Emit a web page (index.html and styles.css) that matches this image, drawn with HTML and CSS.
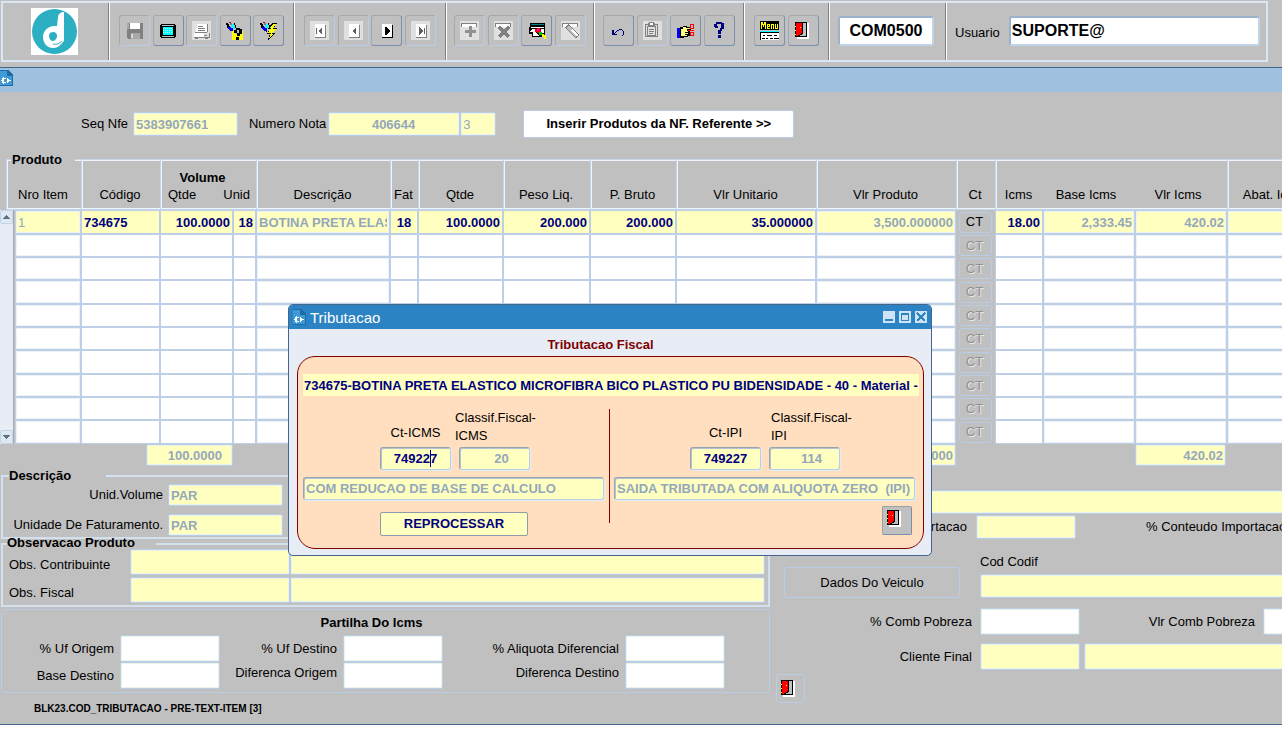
FILE: index.html
```html
<!DOCTYPE html>
<html lang="pt-BR">
<head>
<meta charset="utf-8">
<title>COM0500</title>
<link rel="stylesheet" href="styles.css">
</head>
<body>
<svg class="sprite" aria-hidden="true">
  <symbol id="door" viewBox="0 0 14 17">
    <path fill="#fff" d="M2 1h12v16H2z"/><path fill="#000" d="M0 0h12v15H0z"/><path fill="#c0c0c0" d="M8 1h3v13H5v-1h2v-1h1z"/>
    <path fill="#f00" d="M1 1h6v10H6v1H5v1H3v1H1z"/><path fill="#ff0" d="M5 5h1v1H5zM0 4h1v1H0zM0 8h1v1H0zM0 12h1v1H0z"/>
  </symbol>
  <symbol id="torch" viewBox="0 0 20 20">
    <path fill="#000" d="M1 2h2v1h1v2h1v2h2v3H5V9H4V7H2V4H1z"/><path fill="#d00" d="M4 1h2v1H4z"/><path fill="#00f" d="M3 6h3v1h2v3H6V9H4V8H3z"/>
    <path fill="#0ff" d="M6 3h3v2h1v3H8V6H6z"/><path fill="#808080" d="M5 2h2v2H5z"/><path fill="#000" d="M9 2h1v2h1v3h-1V4H9zM7 10h1v1H7z"/>
  </symbol>
  <symbol id="page" viewBox="0 0 19 19">
    <path fill="#e0e0e0" d="M0 0h19v19H0z"/><path fill="#808080" d="M15 4h1v13H5v-1h10z"/><path fill="#fff" d="M5 3h10v13H5z"/>
  </symbol>
  <symbol id="doc" viewBox="0 0 13 16">
    <path fill="#1d6ca6" d="M0 0h8v5h5v11H0z"/><path fill="#3f9ad8" d="M0 1h7v5h5v9H0z"/><path fill="#1d6ca6" d="M8 0l5 5H8z"/>
    <path fill="#fff" d="M2 8h1V7h1v1h2v1H4v3h2v1H4v1H3v-1H2v-2H1V10h1zM7 8h1v1h1v1h2v1H9v1H8v1H7z"/>
  </symbol>
</svg>

<div class="app">
  <header class="topbar">
    <div class="toolbar">
      <div class="group logo">
        <svg width="47" height="47" viewBox="0 0 47 47" role="img" aria-label="Logo">
          <path fill="#fff" d="M0 0h47v47H0z"/><circle cx="23.500" cy="23.500" r="22.500" fill="#2cafc3"/>
          <path fill="#fff" d="M33 4v26c0 2 0 3-1 4l-1 1c-2 3-5 5-9 5-6 0-10-5-10-11s5-11 11-11h3l1-9c0-3 3-5 6-5z"/>
          <path fill="#2cafc3" d="M22 24c3 0 4 2 4 4s-2 5-4 5-4-2-4-5 2-4 4-4z"/>
          <path fill="none" stroke="#2cafc3" stroke-width="1" d="M22 36c4 1 7-1 9-3"/>
        </svg>
      </div>
      <div class="group">
        <button class="tool off" aria-label="Salvar"><svg width="20" height="20" viewBox="0 0 20 20"><path fill="#808080" d="M2 2h16v16H3v-1H2z"/><path fill="#fff" d="M5 2h10v6H5z"/><path fill="#a8a8a8" d="M2 2h2v6H2zM6 12h9v6H6z"/><path fill="#d8d8d8" d="M6 13h2v4H6z"/></svg></button>
        <button class="tool" aria-label="Tela"><svg width="20" height="20" viewBox="0 0 20 20"><path d="M3 3h14v1h1v12h-1v1H3v-1H2V4h1z"/><path fill="#c0c0c0" d="M4 4h12v12H4z"/><path d="M4 5h12v10H4z"/><path fill="#0ff" d="M5 6h10v8H5z"/><path stroke="#b8ffff" stroke-dasharray="1 1" d="M5 7.500h10M5 9.500h10M5 11.500h10"/></svg></button>
        <button class="tool off" aria-label="Imprimir"><svg width="19" height="19" viewBox="0 0 19 19"><path fill="#e0e0e0" d="M0 0h19v19H0z"/><path fill="#fff" d="M5 3h10v9H4z"/><path fill="#808080" d="M6 5h5v1H6zM6 7h7v1H6zM6 9h7v1H6zM15 3h1v8h-1zM2 16h15v1H2zM12 14h3v1h-3zM17 12h1v5h-1zM3 11h12v1H3zM3 18h3v-1H3zM13 18h3v-1h-3z"/><path fill="#fff" d="M2 12h10v4H2z"/></svg></button>
        <button class="tool" aria-label="Consultar"><svg width="20" height="20" viewBox="0 0 20 20"><use href="#torch"/><path fill="#ff0" d="M7 10h3v9H7zM10 13h3v6h-3zM15 10h3v9h-6v-4h3z"/><path d="M11 7h4v1h2v5h-2v2h-3v-3h2V9h-2v3H9V9h2zM11 16h3v3h-3z"/></svg></button>
        <button class="tool" aria-label="Executar consulta"><svg width="20" height="20" viewBox="0 0 20 20"><use href="#torch"/><path d="M13 2h5l-3 5h3l-4 5h2l-7 7 2-6H8l3-5H9z"/><path fill="#ff0" d="M14 3h3l-3 5h3l-4 5h1l-4 5 2-6H9l3-5h-1z"/></svg></button>
      </div>
      <div class="group">
        <button class="tool off" aria-label="Primeiro"><svg width="19" height="19" viewBox="0 0 19 19"><use href="#page"/><path fill="#606060" d="M6 7h1v6H6zM12 6v8l-4-4z"/></svg></button>
        <button class="tool off" aria-label="Anterior"><svg width="19" height="19" viewBox="0 0 19 19"><use href="#page"/><path fill="#606060" d="M12 6v8l-4-4z"/></svg></button>
        <button class="tool" aria-label="Proximo"><svg width="19" height="19" viewBox="0 0 19 19"><path d="M15 4h1v13H5v-1h10z"/><path fill="#fff" d="M5 3h10v13H5z"/><path d="M8 6h1l4 4-4 4H8z"/></svg></button>
        <button class="tool off" aria-label="Ultimo"><svg width="19" height="19" viewBox="0 0 19 19"><use href="#page"/><path fill="#606060" d="M8 6v8l4-4zM13 7h1v6h-1z"/></svg></button>
      </div>
      <div class="group tight">
        <button class="tool off" aria-label="Inserir"><svg width="19" height="19" viewBox="0 0 19 19"><path fill="#e0e0e0" d="M0 0h19v19H0z"/><path fill="#808080" d="M1 2h16v4H1z"/><path fill="#fff" d="M2 3h14v3H2z"/><path fill="#909090" d="M9 5h3v4h4v3h-4v4H9v-4H5V9h4z"/></svg></button>
        <button class="tool off" aria-label="Remover"><svg width="19" height="19" viewBox="0 0 19 19"><path fill="#e0e0e0" d="M0 0h19v19H0z"/><path fill="#808080" d="M1 2h16v4H1z"/><path fill="#fff" d="M2 3h14v3H2z"/><path stroke="#808080" stroke-width="3" d="M5 6l10 10M15 6L5 16"/></svg></button>
        <button class="tool" aria-label="Pesquisar"><svg width="20" height="20" viewBox="0 0 20 20"><path d="M3 2h15v14H5v-3H2V6h1z"/><path fill="#008080" d="M4 3h13v1H4z"/><path fill="#fff" d="M4 6h13v1H4zM3 10l2-2h3v3l4 4H8v-2H6v-2H3z"/><path fill="#fff" d="M6 13h3v2H6zM14 8h3v4h-3z"/><path fill="#f00" d="M8 8h2V7h3v2h1v3h-4v-1H8z"/><path fill="#f0f" d="M10 8h2v2h-2z"/><path fill="#0c0" d="M12 11h3v3h-3z"/><path fill="#ff0" d="M15 13h2v1h2v4h-2v-2h-2z"/></svg></button>
        <button class="tool off" aria-label="Limpar"><svg width="19" height="19" viewBox="0 0 19 19"><path fill="#e0e0e0" d="M0 0h19v19H0z"/><path fill="#808080" d="M1 2h16v4H1z"/><path fill="#fff" d="M2 3h14v3H2z"/><path stroke="#808080" stroke-width="5" d="M6 5l11 11"/><path stroke="#c0c0c0" stroke-width="3" d="M7 6l9 9"/><path stroke="#fff" stroke-width="2" d="M11 9l6 6"/></svg></button>
      </div>
      <div class="group mid">
        <button class="tool" aria-label="Desfazer"><svg width="20" height="20" viewBox="0 0 20 20"><path fill="#000080" d="M4 9h1v3h1v1h2v1H3V9zM6 11h1v-1h1V9h2V8h3v1h1v1h1v4h-1v1h-1v-1h1v-4h-1V9h-3v1H8v1H7v1H6z"/></svg></button>
        <button class="tool off" aria-label="Colar"><svg width="19" height="19" viewBox="0 0 19 19"><path fill="#e0e0e0" d="M0 0h19v19H0z"/><path fill="none" stroke="#808080" d="M2.500 3.500h12v12h-12zM4.500 5.500h8v9h-8z"/><path fill="#808080" d="M6 1h5v1h1v3H5V2h1zM6 8h5v1H6zM6 10h5v1H6zM6 12h4v1H6z"/><path fill="#fff" d="M7 2h3v2H7z"/></svg></button>
        <button class="tool" aria-label="Recortar"><svg width="20" height="20" viewBox="0 0 20 20"><path fill="#00f" d="M1 7h3v10H1z"/><path d="M4 6h3V5h4v1h4v3h-3v1h2v5h-2v1H8v1H4z"/><path fill="#ff8" d="M5 8h2V6h3v1h4v1h-3v2H9v5H5z"/><path fill="#ff8" d="M9 10h3v1H9zM9 12h3v1H9zM9 14h2v1H9z"/><path fill="none" stroke="#f00" d="M14.500 3.500h3v4h-3zM14.500 11.500h3v3h-3zM12 9.500h6"/></svg></button>
        <button class="tool" aria-label="Ajuda"><svg width="20" height="20" viewBox="0 0 20 20"><path fill="#000080" d="M7 1h6v1h2v6h-2v2h-1v3H9V9h2V7h1V3H8v2h1v2H6V6H5V3h2zM9 14h3v3H9z"/></svg></button>
      </div>
      <div class="group">
        <button class="tool" aria-label="Menu"><svg width="20" height="20" viewBox="0 0 20 20"><path d="M0 0h19v9H0z"/><g fill="none" stroke="#ff0"><path d="M1.500 8V1M2.500 1v3M3.500 3v3M4.500 1v3M5.500 8V1M10 7.500H7.500v-4h2v2h-2M11.500 8V3M11.500 3.500h2V8M15.500 3v4.500h2V3"/></g><path fill="#fff" d="M0 11h19v8H0z"/><path fill="#0ff" d="M0 10h19v1H0z"/><path d="M0 11h19v1H0zM0 11h1v8H0zM3 14h2v1H3zM7 14h5v1H7zM14 14h3v1h-3zM2 17h3v1H2zM6 17h2v1H6zM10 17h3v1h-3zM14 17h5v1h-5z"/></svg></button>
        <button class="tool" aria-label="Sair"><svg width="20" height="20" viewBox="0 0 20 20"><use href="#door" x="1" y="1" width="14" height="17"/></svg></button>
      </div>
      <div class="group screen"><input class="big" aria-label="Tela atual" value="COM0500"></div>
      <div class="group user"><label for="usuario">Usuario</label><input class="big" id="usuario" value="SUPORTE@"></div>
    </div>
  </header>
  <div class="window-bar"><svg width="13" height="16"><use href="#doc"/></svg></div>

  <main>
    <div class="note-row">
      <label for="seq">Seq Nfe</label><input id="seq" class="field dim" value="5383907661" readonly>
      <label for="nota">Numero Nota</label><input id="nota" class="field dim num" value="406644" readonly><input class="field dim serie" aria-label="Serie" value="3" readonly>
      <button class="insert">Inserir Produtos da NF. Referente &gt;&gt;</button>
    </div>

    <section class="products">
      <h2>Produto</h2>
      <div class="scroller"><button aria-label="Subir"><svg width="7" height="4"><path fill="#5f6f85" d="M3 0h1l3 4H0z"/></svg></button><button aria-label="Descer"><svg width="7" height="4"><path fill="#5f6f85" d="M0 0h7L4 4H3z"/></svg></button></div>
      <table>
        <colgroup><col class="c9"><col class="c66"><col class="c79"><col class="c73"><col class="c23"><col class="c134"><col class="c28"><col class="c85"><col class="c87"><col class="c86"><col class="c140"><col class="c140"><col class="c39"><col class="c48"><col class="c92"><col class="c92"><col class="c94"></colgroup>
        <thead><tr>
          <th colspan="2">Nro Item</th><th>Código</th>
          <th colspan="2"><strong>Volume</strong><span class="pair"><span>Qtde</span><span>Unid</span></span></th>
          <th>Descrição</th><th>Fat</th><th>Qtde</th><th>Peso Liq.</th><th>P. Bruto</th><th>Vlr Unitario</th><th>Vlr Produto</th><th>Ct</th><th>Icms</th><th class="open">Base Icms</th><th class="open">Vlr Icms</th><th>Abat. Icms</th>
        </tr></thead>
        <tbody id="items"></tbody>
      </table>
    </section>

    <div class="totals">
      <input class="field dim sum-volume" aria-label="Total volume" value="100.0000" readonly>
      <input class="field dim sum-product" aria-label="Total produto" value="3,500.000000" readonly>
      <input class="field dim sum-icms" aria-label="Total icms" value="420.02" readonly>
    </div>

    <div class="lower">
      <div class="left">
        <fieldset class="desc">
          <legend>Descrição</legend>
          <label for="uv">Unid.Volume</label><input id="uv" class="field dim" value="PAR" readonly>
          <label for="uf">Unidade De Faturamento.</label><input id="uf" class="field dim" value="PAR" readonly>
        </fieldset>
        <fieldset class="obs">
          <legend>Observacao Produto</legend>
          <label for="oc">Obs. Contribuinte</label><input id="oc" class="field"><input class="field" aria-label="Texto contribuinte">
          <label for="of">Obs. Fiscal</label><input id="of" class="field"><input class="field" aria-label="Texto fiscal">
        </fieldset>
        <section class="share">
          <h3>Partilha Do Icms</h3>
          <div class="share-grid">
            <label for="p1">% Uf Origem</label><input id="p1" class="field white">
            <label for="p2">% Uf Destino</label><input id="p2" class="field white">
            <label for="p3">% Aliquota Diferencial</label><input id="p3" class="field white">
            <label for="p4">Base Destino</label><input id="p4" class="field white">
            <label for="p5" class="high">Diferenca Origem</label><input id="p5" class="field white">
            <label for="p6" class="high">Diferenca Destino</label><input id="p6" class="field white">
          </div>
        </section>
      </div>
      <div class="right">
        <input class="field wide" aria-label="Detalhe">
        <div class="import"><label for="imp">Importacao</label><input id="imp" class="field"><span>% Conteudo Importacao</span></div>
        <div class="vehicle"><button class="plain">Dados Do Veiculo</button><div class="codif"><label for="cod">Cod Codif</label><input id="cod" class="field"></div></div>
        <div class="comb"><label for="cp">% Comb Pobreza</label><input id="cp" class="field white"><label for="vp">Vlr Comb Pobreza</label><input id="vp" class="field white"></div>
        <div class="client"><label for="cf">Cliente Final</label><input id="cf" class="field"><input class="field" aria-label="Nome do cliente"></div>
        <button class="plain exit" aria-label="Sair"><svg width="14" height="17"><use href="#door"/></svg></button>
      </div>
    </div>
    <footer>BLK23.COD_TRIBUTACAO - PRE-TEXT-ITEM [3]</footer>
  </main>

  <div class="dialog" role="dialog" aria-label="Tributacao">
    <div class="dialog-bar">
      <svg width="13" height="16"><use href="#doc"/></svg><span>Tributacao</span>
      <button aria-label="Minimizar"><svg width="12" height="12"><path fill="#2c83c4" d="M2 8h8v2H2z"/></svg></button>
      <button aria-label="Maximizar"><svg width="12" height="12"><path fill="#2c83c4" fill-rule="evenodd" d="M2 2h8v8H2zM3 4v5h6V4z"/></svg></button>
      <button aria-label="Fechar"><svg width="12" height="12"><path stroke="#2c83c4" stroke-width="2" d="M2 2l8 8M10 2l-8 8"/></svg></button>
    </div>
    <h3>Tributacao Fiscal</h3>
    <div class="panel">
      <input class="item-name" aria-label="Item" value="734675-BOTINA PRETA ELASTICO MICROFIBRA BICO PLASTICO PU BIDENSIDADE - 40 - Material -">
      <div class="halves">
        <div class="half">
          <div class="codes">
            <label for="ci">Ct-ICMS</label><label for="ki" class="two">Classif.Fiscal-<br>ICMS</label>
            <span class="with-caret"><input id="ci" class="sunk" value="749227"><i class="caret"></i></span><input id="ki" class="sunk dim" value="20" readonly>
          </div>
          <input class="sunk dim text" aria-label="Descricao ICMS" value="COM REDUCAO DE BASE DE CALCULO" readonly>
          <button class="redo">REPROCESSAR</button>
        </div>
        <div class="half ipi">
          <div class="codes">
            <label for="cj">Ct-IPI</label><label for="kj" class="two">Classif.Fiscal-<br>IPI</label>
            <input id="cj" class="sunk" value="749227"><input id="kj" class="sunk dim" value="114" readonly>
          </div>
          <input class="sunk dim text" aria-label="Descricao IPI" value="SAIDA TRIBUTADA COM ALIQUOTA ZERO  (IPI)" readonly>
          <button class="leave" aria-label="Sair"><svg width="14" height="17"><use href="#door"/></svg></button>
        </div>
      </div>
    </div>
  </div>
</div>
<script src="grid.js"></script>
</body>
</html>
```
FILE: styles.css
```css
* { box-sizing: border-box; }
body { margin: 0; background: #fff; color: #000; font: 13px/16px "Liberation Sans", Arial, sans-serif; overflow-x: hidden; }
input, button { font: inherit; color: inherit; margin: 0; padding: 0; min-width: 0; border-radius: 2px; outline: 0; }
button { display: flex; align-items: center; justify-content: center; background: #c0c0c0; }
h2, h3 { margin: 0; font-size: 13px; }
svg { display: block; flex: none; shape-rendering: crispEdges; }
.sprite { position: absolute; width: 0; height: 0; }
.app { position: relative; overflow: hidden; background: #c0c0c0; border-bottom: 1px solid #44648c; }

/* toolbar */
.topbar { padding: 1px 14px 5px 1px; border-bottom: 1px solid #44648c; }
.toolbar { display: grid; grid-template-columns: 107px 185px 152px 148px 150px 85px 117px 1fr; height: 61px; border: 2px solid #d9e6f3; }
.group { display: flex; align-items: center; justify-content: space-between; padding: 0 10px 2px 9px; border-right: 1px solid #fff; box-shadow: inset -1px 0 #808080; }
.group.logo { justify-content: flex-start; padding: 0 0 0 28px; }
.logo svg { shape-rendering: auto; }
.group.tight { padding-left: 7px; padding-right: 8px; }
.group.mid { padding-left: 8px; padding-right: 9px; }
.group.screen { padding-left: 8px; padding-right: 12px; }
.group.user { gap: 9px; padding-left: 8px; padding-right: 6px; border: 0; box-shadow: none; }
.user label { padding-top: 4px; }
.tool { width: 31px; height: 31px; border: 1px solid; border-color: #a4a8ac #7890ac #7890ac #a4a8ac; border-radius: 3px; }
.tool.off { border-color: #a8a8a8 #b8cde6 #b8cde6 #a8a8a8; }
.big { flex: 1; width: 100%; height: 30px; border: 2px solid #c0d4ea; border-top-color: #9cb2cc; border-left-color: #9cb2cc; border-radius: 3px; background: #fff; font-size: 16px; font-weight: bold; padding: 0 1px; }
.screen .big { text-align: center; }
.window-bar { height: 24px; padding-top: 2px; background: #9fc0de; }

/* fields */
.field { height: 24px; border: 1px solid #b8cde6; background: #ffffbf; box-shadow: inset 0 0 0 1px #eef3e8; padding: 0 2px; font-weight: bold; }
.white { background: #fff; }
.dim { color: #94a8bc; }

main { padding-top: 18px; }
.note-row { display: flex; align-items: center; height: 28px; padding-left: 81px; }
#seq { width: 105px; margin: 0 11px 0 5px; }
#nota { width: 132px; margin-left: 2px; padding-right: 44px; text-align: right; }
.serie { width: 36px; margin-right: 27px; font-weight: normal; }
.insert { width: 271px; height: 28px; border: 1px solid #b8cde6; background: #fff; font-weight: bold; }

/* product grid */
.products { position: relative; margin-top: 21px; padding-left: 6px; }
.products h2 { position: absolute; left: 11px; top: 0; width: 64px; height: 3px; line-height: 2px; padding-left: 1px; background: #c0c0c0; }
.scroller { position: absolute; left: 0; top: 51px; bottom: 0; width: 14px; display: flex; flex-direction: column; justify-content: space-between; background: #e8edf5; border-right: 1px solid #a8a8a8; }
.scroller button { height: 14px; border: 1px solid #c0d4ea; background: #dfe8f2; }
table { table-layout: fixed; width: 1315px; border-spacing: 0; }
.c9 { width: 9px; } .c66 { width: 66px; } .c79 { width: 79px; } .c73 { width: 73px; } .c23 { width: 23px; } .c134 { width: 134px; }
.c28 { width: 28px; } .c85 { width: 85px; } .c87 { width: 87px; } .c86 { width: 86px; } .c140 { width: 140px; } .c39 { width: 39px; }
.c48 { width: 48px; } .c92 { width: 92px; } .c94 { width: 94px; }
th { height: 51px; padding: 0 2px 6px 0; vertical-align: bottom; font-weight: normal; white-space: nowrap; border: 1px solid #c6d6ea; border-right: 0; box-shadow: inset 1px 1px #eef4fb, inset 0 -1px #eef4fb; }
th.open { border-left: 0; padding-right: 6px; box-shadow: inset 0 1px #eef4fb, inset 0 -1px #eef4fb; }
th strong { margin-right: 10px; }
.pair { display: flex; justify-content: space-between; padding: 1px 4px 0 7px; }
td { height: 23px; padding: 0; border: 1px solid #bccfe6; background: #fff; }
tbody tr:nth-child(3n + 1) td { height: 24px; }
tbody tr:first-child td { background: #ffffbf; }
tbody tr td.side, tbody tr td.ct { background: none; border: 0; }
td input { display: block; width: 100%; height: 20px; border: 0; background: none; padding: 0 2px; color: #000080; font-weight: bold; text-align: right; }
td.dim { box-shadow: inset 0 0 0 1px #edf2f6; }
td.dim input { color: #94a8bc; }
td.start input { text-align: left; }
td.middle input { text-align: center; }
td.light input { font-weight: normal; }
.ct button { width: 33px; height: 21px; margin: 0 auto; padding-right: 2px; border: 1px solid #b8cde6; border-radius: 3px; }
.ct button:disabled { color: #909090; text-shadow: 1px 1px #e8e8e8; }

.totals { display: grid; grid-template-columns: 87px 583px 140px 179px 91px; justify-content: start; padding: 0 0 1px 146px; }
.totals .field { height: 22px; text-align: right; }
.totals .sum-volume { padding-right: 10px; }
.sum-product { grid-column: 3; }
.sum-icms { grid-column: 5; }

/* lower area */
.lower { display: grid; grid-template-columns: 770px 1fr; }
.left { padding: 1px 0 0 1px; }
fieldset { margin: 0; padding: 0; border: 2px solid #d3e0ee; min-width: 0; }
legend { padding: 0; font-weight: bold; }
.desc { display: grid; grid-template-columns: 160px 115px; gap: 8px 5px; align-items: center; padding-bottom: 1px; justify-content: start; }
.desc legend { width: 97px; margin-left: 6px; }
.desc .field { height: 22px; }
.desc label { text-align: right; }
.obs { display: grid; grid-template-columns: 121px 160px 1fr; row-gap: 2px; align-items: center; padding: 0 3px 2px 6px; }
.obs legend { width: 149px; height: 10px; line-height: 8px; margin-left: -2px; }
.obs .field { height: 26px; }
.obs label { padding-top: 5px; }
.share { margin-top: 2px; border: 1px solid #b8cde6; border-radius: 4px; padding: 4px 0 3px; }
.share h3 { text-align: center; padding-right: 28px; margin-bottom: 4px; line-height: 17px; }
.share-grid { display: grid; grid-template-columns: 112px 106px 117px 108px 174px 106px; align-items: center; justify-content: start; }
.share-grid label { text-align: right; }
.share-grid .field { width: 100px; height: 27px; margin-left: 6px; }
.share-grid .high { padding-bottom: 6px; }
.right { padding-top: 23px; white-space: nowrap; min-width: 0; overflow: hidden; }
.wide { display: block; width: 100%; margin-left: 14px; height: 24px; }
.import { display: grid; grid-template-columns: 197px 100px auto; column-gap: 9px; align-items: center; margin-top: 1px; }
.import label, .comb label, .client label { text-align: right; }
.import span { padding-left: 61px; }
.vehicle { display: grid; grid-template-columns: 176px 1fr; column-gap: 20px; margin: 15px -4px 0 14px; }
.plain { border: 1px solid #b8cde6; border-radius: 3px; }
.vehicle .plain { height: 31px; margin-top: 13px; }
.codif { display: grid; row-gap: 3px; }
.codif .field { width: 100%; height: 24px; }
.comb { display: grid; grid-template-columns: 202px 100px 167px 100px; column-gap: 8px; align-items: center; margin-top: 10px; }
.comb .field { height: 27px; }
.client { display: grid; grid-template-columns: 202px 108px 1fr; align-items: center; margin: 8px -4px 0 0; }
.client .field { height: 27px; margin-left: 8px; }
.client .field:last-child { margin-left: 4px; }
.exit { width: 29px; height: 29px; margin: 4px 0 0 6px; padding-right: 5px; }
footer { padding: 0 34px 10px; font-size: 10px; line-height: 11px; font-weight: bold; }

/* tax dialog */
.dialog { position: absolute; left: 288px; top: 304px; width: 644px; border: 1px solid #44648c; border-radius: 5px; background: #e8edf5; padding: 0 7px 6px 8px; overflow: hidden; }
.dialog-bar { display: flex; align-items: center; gap: 4px; height: 24px; margin: 0 -7px 0 -8px; padding: 0 4px; background: #2c83c4; color: #fff; font-size: 15px; }
.dialog-bar span { flex: 1; padding-top: 1px; }
.dialog-bar button { width: 12px; height: 12px; border: 0; border-radius: 0; background: #cfe3f5; }
.dialog h3 { padding: 8px 20px 3px 0; text-align: center; color: #800000; }
.panel { border: 1px solid #800000; border-radius: 18px; background: #ffdfbf; padding: 17px 4px 12px 5px; }
.item-name { display: block; width: 100%; height: 22px; border: 0; border-radius: 0; background: #ffffbf; color: #000080; font-weight: bold; padding: 0 1px; }
.halves { display: grid; grid-template-columns: 307px 1fr; margin-top: 13px; }
.half { display: flex; flex-direction: column; height: 127px; }
.half:first-child { padding-right: 6px; background: linear-gradient(#800000, #800000) right top / 1px 114px no-repeat; }
.half.ipi { padding: 0 4px; }
.codes { display: grid; grid-template-columns: 71px 84px; column-gap: 8px; align-items: end; padding-left: 77px; }
.codes label { text-align: center; line-height: 18px; padding-bottom: 5px; }
.codes .two { text-align: left; margin-left: -4px; padding-bottom: 2px; }
.ipi .codes { padding-left: 76px; }
.ipi .codes .two { margin-left: 2px; }
.sunk { width: 71px; height: 23px; border: 1px solid #b8cde6; border-top-color: #98a4b0; border-left-color: #98a4b0; border-radius: 3px; box-shadow: 1px 1px #e4ecf4, inset 1px 1px #b4c4d4; background: #ffffbf; color: #000080; font-weight: bold; text-align: center; }
.sunk.dim { color: #94a8bc; }
.codes .dim { padding-left: 14px; }
.with-caret { position: relative; display: flex; }
.caret { position: absolute; left: 50px; top: 3px; width: 1px; height: 17px; background: #000080; }
.sunk.text { width: 100%; margin-top: 7px; text-align: left; padding-left: 2px; }
.redo { width: 148px; height: 24px; margin: 12px 0 0 77px; border: 1px solid #8c9cac; background: #ffffbf; color: #000080; font-weight: bold; }
.leave { align-self: flex-end; width: 30px; height: 29px; margin: 6px 3px 0 0; padding-right: 7px; padding-bottom: 4px; border: 1px solid; border-color: #a0a0a0 #7890ac #7890ac #a0a0a0; }
```
FILE: grid.js
```js
const columns = [
  ["Nro Item", "1", "dim start light"],
  ["Código", "734675", "start"],
  ["Qtde volume", "100.0000", ""],
  ["Unid", "18", ""],
  ["Descrição", "BOTINA PRETA ELASTICO", "dim start"],
  ["Fat", "18", "middle"],
  ["Qtde", "100.0000", ""],
  ["Peso Liq.", "200.000", ""],
  ["P. Bruto", "200.000", ""],
  ["Vlr Unitario", "35.000000", ""],
  ["Vlr Produto", "3,500.000000", "dim"],
  null,
  ["Icms", "18.00", ""],
  ["Base Icms", "2,333.45", "dim"],
  ["Vlr Icms", "420.02", "dim"],
  ["Abat. Icms", "", "dim"]
];

const body = document.getElementById("items");
for (let row = 0; row < 10; row++) {
  const cells = columns.map(column => {
    if (!column) {
      return `<td class="ct"><button ${row ? "disabled" : ""}>CT</button></td>`;
    }
    const [label, value, kind] = column;
    return `<td class="${kind}"><input aria-label="${label} ${row + 1}" value="${row ? "" : value}"></td>`;
  });
  body.insertAdjacentHTML("beforeend", `<tr><td class="side"></td>${cells.join("")}</tr>`);
}
```
